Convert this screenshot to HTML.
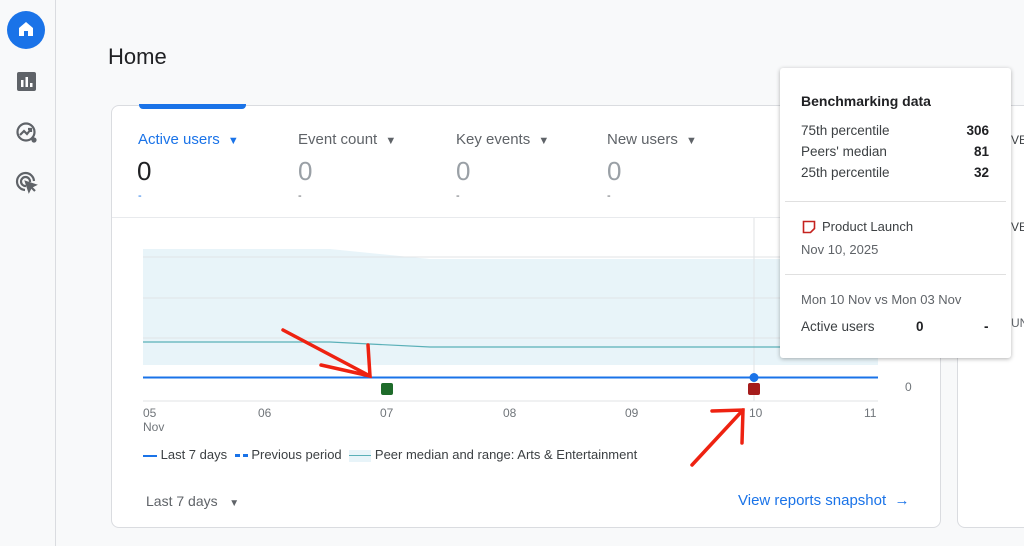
<!DOCTYPE html>
<html><head><style>
*{margin:0;padding:0;box-sizing:border-box}
body{width:1024px;height:546px;overflow:hidden;background:#f8f9fa;font-family:"Liberation Sans",Arial,sans-serif;position:relative;color:#202124}
.abs{position:absolute}
.side{left:0;top:0;width:56px;height:546px;background:#f8f9fa;border-right:1px solid #dadce0}
.card{left:111px;top:105px;width:830px;height:423px;background:#fff;border:1px solid #dadce0;border-radius:8px}
.card2{left:957px;top:105px;width:80px;height:423px;background:#fff;border:1px solid #dadce0;border-radius:8px}
.met{font-size:15px;color:#5f6368}
.met span{font-size:11px;margin-left:4px}
.val{font-size:26px;color:#202124}
.dash{font-size:11px;color:#5f6368}
.tt{left:780px;top:68px;width:231px;height:290px;background:#fff;box-shadow:0 1px 4px rgba(0,0,0,.3);border-radius:3px;font-size:13.5px;color:#3c4043}
.ax{font-size:12px;color:#70757a}
</style></head><body>
<div class="abs side"></div>
<div class="abs" style="left:7px;top:11px;width:38px;height:38px;border-radius:50%;background:#1a73e8"></div>
<svg class="abs" style="left:16px;top:19px" width="20" height="20" viewBox="0 0 20 20"><path d="M3 9L10 3L17 9V17H12V12H8V17H3Z" fill="#fff"/></svg>
<svg class="abs" style="left:17px;top:72px" width="19" height="19" viewBox="0 0 19 19"><rect width="19" height="19" rx="2" fill="#5f6368"/><rect x="4" y="8" width="2.5" height="7" fill="#fff"/><rect x="8.5" y="5" width="2.5" height="10" fill="#fff"/><rect x="13" y="11" width="2.5" height="4" fill="#fff"/></svg>
<svg class="abs" style="left:15px;top:121px" width="24" height="24" viewBox="0 0 24 24" fill="none" stroke="#5f6368" stroke-width="2.2"><circle cx="11" cy="11" r="8.5"/><path d="M5 14L9 10L12 13L16 8M13 8H16V11"/><circle cx="19" cy="19" r="1.5" fill="#5f6368"/></svg>
<svg class="abs" style="left:15px;top:171px" width="24" height="24" viewBox="0 0 24 24" fill="none" stroke="#5f6368" stroke-width="2.2"><path d="M19 10A8.5 8.5 0 1 0 10 19"/><path d="M15 11A4.5 4.5 0 1 0 11 15"/><path d="M11 11L20 14L16 16L14 20Z" fill="#5f6368"/><path d="M16 16L20 20"/></svg>
<div class="abs" style="left:108px;top:44px;font-size:22px;color:#202124">Home</div>
<div class="abs card"></div>
<div class="abs card2"></div>
<div class="abs" style="left:139px;top:104px;width:107px;height:5px;background:#1a73e8;border-radius:0 0 4px 4px"></div>
<div class="abs met" style="left:138px;top:131px;color:#1a73e8">Active users <span>▼</span></div>
<div class="abs met" style="left:298px;top:131px">Event count <span>▼</span></div>
<div class="abs met" style="left:456px;top:131px">Key events <span>▼</span></div>
<div class="abs met" style="left:607px;top:131px">New users <span>▼</span></div>
<div class="abs val" style="left:137px;top:156px">0</div>
<div class="abs val" style="left:298px;top:156px;color:#9aa0a6">0</div>
<div class="abs val" style="left:456px;top:156px;color:#9aa0a6">0</div>
<div class="abs val" style="left:607px;top:156px;color:#9aa0a6">0</div>
<div class="abs dash" style="left:138px;top:190px;color:#1a73e8">-</div>
<div class="abs dash" style="left:298px;top:190px">-</div>
<div class="abs dash" style="left:456px;top:190px">-</div>
<div class="abs dash" style="left:607px;top:190px">-</div>
<div class="abs" style="left:112px;top:217px;width:828px;height:1px;background:#e8eaed"></div>
<svg class="abs" style="left:0;top:0" width="1024" height="546">
<path d="M143 249H330L430 259H878V365H143Z" fill="#e8f4f9"/>
<g stroke="#e0e3e6" stroke-width="1"><path d="M143 257H878M143 298H878M143 338H878M143 401H878M754 218V401"/></g>
<path d="M143 342H330L430 347H878" stroke="#5ab0b8" stroke-width="1.2" fill="none"/>
<path d="M143 377.5H878" stroke="#1a73e8" stroke-width="2"/>
<rect x="381" y="383" width="12" height="12" rx="2" fill="#1e6b2a"/>
<rect x="748" y="383" width="12" height="12" rx="2" fill="#a51c1c"/>
<circle cx="754" cy="377.5" r="4.5" fill="#1a73e8"/>
<g stroke="#ee2211" stroke-width="3.5" fill="none" stroke-linecap="round"><path d="M283 330L370 376M321 365L370 376L368 345"/><path d="M692 465L743 410M712 411L743 410L742 443"/></g>
</svg>
<div class="abs ax" style="left:143px;top:406px">05<br>Nov</div>
<div class="abs ax" style="left:258px;top:406px">06</div>
<div class="abs ax" style="left:380px;top:406px">07</div>
<div class="abs ax" style="left:503px;top:406px">08</div>
<div class="abs ax" style="left:625px;top:406px">09</div>
<div class="abs ax" style="left:749px;top:406px">10</div>
<div class="abs ax" style="left:864px;top:406px">11</div>
<div class="abs ax" style="left:905px;top:380px">0</div>
<div class="abs" style="left:143px;top:447px;font-size:13px;color:#3c4043;white-space:nowrap">
<span style="display:inline-block;width:14px;height:2px;background:#1a73e8;vertical-align:middle"></span> Last 7 days
<span style="display:inline-block;width:5px;height:3px;background:#1a73e8;vertical-align:middle;margin-left:4px"></span><span style="display:inline-block;width:5px;height:3px;background:#1a73e8;vertical-align:middle;margin-left:3px"></span> Previous period
<span style="display:inline-block;width:22px;height:12px;background:#e8f4f9;vertical-align:middle;margin-left:4px;position:relative"><span style="position:absolute;left:0;top:5px;width:22px;height:1.5px;background:#5ab0b8"></span></span> Peer median and range: Arts &amp; Entertainment</div>
<div class="abs" style="left:146px;top:493px;font-size:14px;color:#5f6368">Last 7 days &nbsp;&nbsp;<span style="font-size:10px">▼</span></div>
<div class="abs" style="left:738px;top:492px;font-size:15px;color:#1a73e8">View reports snapshot &nbsp;→</div>
<div class="abs tt">
<div class="abs" style="left:21px;top:25px;font-weight:bold;font-size:14px;color:#202124">Benchmarking data</div>
<div class="abs" style="left:21px;top:55px">75th percentile</div><div class="abs" style="right:22px;top:55px;font-weight:bold;color:#202124">306</div>
<div class="abs" style="left:21px;top:76px">Peers' median</div><div class="abs" style="right:22px;top:76px;font-weight:bold;color:#202124">81</div>
<div class="abs" style="left:21px;top:97px">25th percentile</div><div class="abs" style="right:22px;top:97px;font-weight:bold;color:#202124">32</div>
<div class="abs" style="left:5px;top:133px;width:221px;height:1px;background:#e0e0e0"></div>
<svg class="abs" style="left:22px;top:152px" width="14" height="14" viewBox="0 0 14 14"><path d="M1.5 1.5H12.5V8.5L8.5 12.5H1.5Z" fill="none" stroke="#c5221f" stroke-width="1.6"/></svg>
<div class="abs" style="left:42px;top:151px;font-size:13px;color:#3c4043">Product Launch</div>
<div class="abs" style="left:21px;top:174px;font-size:13px;color:#5f6368">Nov 10, 2025</div>
<div class="abs" style="left:5px;top:206px;width:221px;height:1px;background:#e0e0e0"></div>
<div class="abs" style="left:21px;top:224px;font-size:13px;color:#5f6368">Mon 10 Nov vs Mon 03 Nov</div>
<div class="abs" style="left:21px;top:251px">Active users</div>
<div class="abs" style="left:136px;top:251px;font-weight:bold;color:#202124">0</div>
<div class="abs" style="left:204px;top:251px;font-weight:bold;color:#202124">-</div>
</div>
<div class="abs" style="left:1011px;top:133px;font-size:12px;color:#3c4043">VE</div>
<div class="abs" style="left:1011px;top:220px;font-size:12px;color:#3c4043">VE</div>
<div class="abs" style="left:1011px;top:316px;font-size:12px;color:#5f6368">UN</div>
</body></html>
